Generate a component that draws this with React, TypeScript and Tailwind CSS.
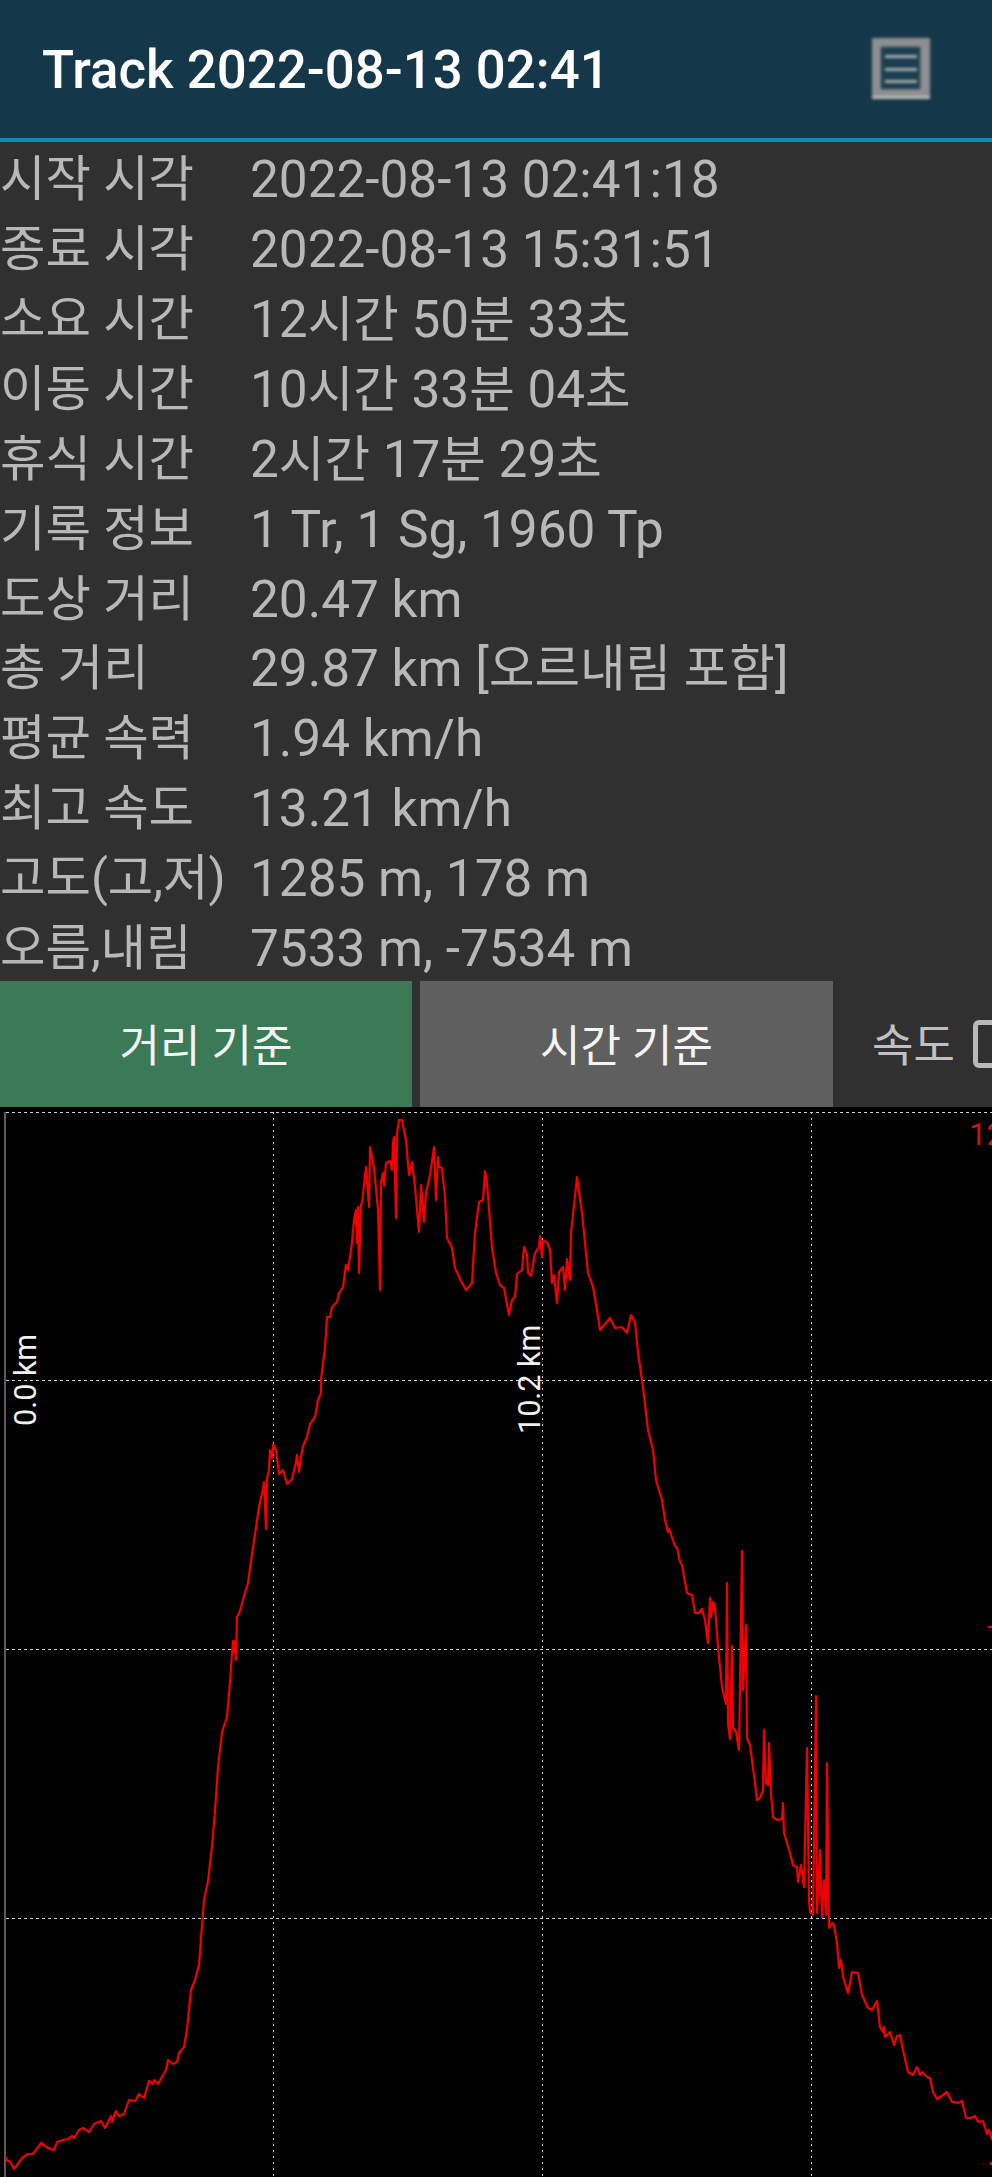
const rows = [
  ['시작 시각', '2022-08-13 02:41:18'],
  ['종료 시각', '2022-08-13 15:31:51'],
  ['소요 시간', '12시간 50분 33초'],
  ['이동 시간', '10시간 33분 04초'],
  ['휴식 시간', '2시간 17분 29초'],
  ['기록 정보', '1 Tr, 1 Sg, 1960 Tp'],
  ['도상 거리', '20.47 km'],
  ['총 거리', '29.87 km [오르내림 포함]'],
  ['평균 속력', '1.94 km/h'],
  ['최고 속도', '13.21 km/h'],
  ['고도(고,저)', '1285 m, 178 m'],
  ['오름,내림', '7533 m, -7534 m'],
];

type Pt = [number, number];

// elevation trace, in page coordinates
const climb: Pt[] = [
  [6,2157],[7,2161],[9,2161],[11,2163],[14,2169],[17,2165],[22,2158],[28,2154],[33,2154],[41,2143],[48,2148],[54,2150],[57,2142],[63,2140],[68,2139],[72,2136],[74,2138],[79,2130],[83,2128],[89,2132],[94,2124],[101,2121],[105,2128],[111,2116],[112,2122],[116,2111],[119,2116],[124,2114],[129,2100],[135,2101],[139,2094],[144,2098],[149,2081],[153,2084],[154,2080],[158,2084],[163,2075],[166,2070],[168,2060],[173,2064],[177,2062],[179,2053],[184,2047],[187,2029],[191,1990],[195,1980],[199,1965],[202,1925],[204,1900],[208,1881],[212,1846],[215,1811],[218,1767],[222,1732],[227,1717],[230,1682],[232,1653],[233,1641],[234,1653],[235,1641],[236,1660],[237,1617],[240,1611],[244,1596],[248,1583],[252,1554],[257,1521],[259,1507],[263,1489],[264,1482],[266,1529],[267,1479],[269,1469],[270,1450],[272,1458],[273,1444],[276,1450],[279,1474],[283,1470],[287,1484],[292,1479],[296,1462],[297,1455],[299,1472],[301,1457],[303,1446],[307,1437],[310,1424],[315,1417],[318,1400],
  [321,1393],[321,1380],[325,1347],[327,1317],[330,1317],[332,1307],[337,1302],[339,1293],[343,1287],[346,1265],[348,1270],[352,1243],[354,1220],[356,1210],[357,1243],[358,1207],[359,1273],[361,1204],[362,1203],[366,1167],[369,1207],[370,1147],[374,1168],[378,1210],[380,1290],[381,1183],[383,1173],[384,1186],[386,1163],[390,1161],[392,1170],[393,1143],[394,1137],[396,1218],[397,1133],[399,1120],[402,1120],[406,1140],[409,1175],[412,1162],[415,1187],[419,1232],[421,1185],[424,1222],[426,1193],[430,1175],[434,1147],[436,1200],[438,1157],[439,1167],[442,1168],[445,1197],[447,1238],[452,1248],[455,1268],[462,1283],[466,1290],[472,1283],[475,1233],[479,1202],[483,1200],[485,1171],[487,1183],[492,1247],[496,1273],[500,1285],[504,1288],[509,1315],[512,1300],[515,1297],[517,1274],[522,1270],[524,1247],[527,1255],[528,1273],[531,1276],[535,1253],[539,1247],[540,1236],[542,1257],[543,1241],[547,1242],[550,1250],[552,1283],[554,1275],[557,1303],[559,1272],[563,1267],[565,1290],[567,1259],[570,1280],[571,1233],[577,1177],[582,1213],[588,1273],[593,1287],[597,1310],[600,1330],[610,1318],[615,1328],[622,1327],[627,1333],[631,1315],[635,1322],[638,1353],[643,1387],[648,1430],[653,1450],[656,1480],[662,1500],
  [665,1520],[668,1532],[669,1529],[675,1546],[677,1548],[680,1562],[682,1565],[687,1593],[692,1595],[695,1613],[699,1613],[702,1609],[705,1620],[708,1643],[710,1598],[711,1617],[713,1602],[715,1607],[718,1647],[722,1687],[726,1704],[727,1583],[728,1723],[730,1739],[732,1646],[733,1728],[736,1732],[739,1750],[742,1551],[743,1690],[746,1625],[747,1738],[750,1745],[755,1783],[757,1800],[760,1798],[763,1790],[764,1730],[766,1783],[768,1785],[769,1743],[771,1793],[773,1817],[777,1820],[782,1819],[783,1803],[784,1833],[790,1853],[793,1865],[797,1867],[798,1882],[801,1865],[804,1887],[807,1748],[809,1900],
  [810,1912],[813,1915],[816,1696],[817,1913],[820,1850],[822,1917],[824,1880],[826,1915],[827,1763],[829,1928],[832,1923],[834,1925],[837,1943],[839,1968],[841,1960],[843,1977],[848,1993],[852,1972],[858,1973],[862,1995],[868,2008],[872,2010],[877,2001],[880,2027],[883,2032],[884,2027],[885,2037],[890,2032],[894,2045],[897,2036],[900,2035],[903,2050],[908,2072],[913,2075],[917,2067],[920,2075],[922,2072],[927,2077],[930,2078],[933,2092],[937,2099],[940,2097],[943,2095],[947,2092],[952,2102],[955,2102],[958,2103],[962,2101],[966,2118],[971,2118],[975,2116],[978,2122],[983,2121],[987,2134],[989,2130],[992,2140],
];

const tracePath = 'M' + climb.map(([x, y]) => `${x} ${y}`).join('L');

// hangul runs are a bit smaller than the digits around them
function Value({ text }: { text: string }) {
  return (
    <span className="text-[51.3px]">
      {text.split(/([가-힣]+)/).map((part, i) =>
        i % 2 ? (
          <span key={i} className="text-[49.5px]">{part}</span>
        ) : (
          part
        ),
      )}
    </span>
  );
}

function MenuIcon() {
  return (
    <svg width="64" height="68" viewBox="0 0 64 68" className="blur-[1.5px]">
      <rect x="2" y="3" width="58" height="61" fill="#8f8f8f" />
      <rect x="2" y="61" width="58" height="3" fill="#bdbdbd" />
      <rect x="11" y="12" width="39" height="42" fill="#1b3e50" stroke="#3d5664" />
      <rect x="15" y="20" width="32" height="3" fill="#a8aeb2" />
      <rect x="15" y="33" width="32" height="3" fill="#a8aeb2" />
      <rect x="15" y="45" width="32" height="3" fill="#a8aeb2" />
    </svg>
  );
}

function ElevationChart() {
  const font = 'Roboto, sans-serif';
  return (
    <svg width="992" height="1070" viewBox="0 1107 992 1070" className="block bg-black">
      <g stroke="#cfcfcf" strokeWidth="1" shapeRendering="crispEdges">
        {[1112.5, 1380.5, 1649.5, 1918.5].map((y) => (
          <line key={y} x1="6" y1={y} x2="992" y2={y} strokeDasharray="3 3" />
        ))}
        {[273.5, 542.5, 811.5].map((x) => (
          <line key={x} x1={x} y1="1112" x2={x} y2="2177" strokeDasharray="2 4" />
        ))}
      </g>
      <rect x="4" y="1112" width="2" height="1065" fill="#5a5a5a" />
      <path d={tracePath} fill="none" stroke="#f00000" strokeWidth="2.2" strokeLinejoin="round" />
      <rect x="988" y="1626" width="4" height="2" fill="#e01010" />
      <rect x="990" y="2162" width="2" height="3" fill="#e01010" />
      <text x="969" y="1145" fontFamily={font} fontSize="31" fill="#c81414">12</text>
      <text transform="translate(36 1426) rotate(-90)" fontFamily={font} fontSize="30.5" fill="#f0f0f0">0.0 km</text>
      <text transform="translate(540 1434) rotate(-90)" fontFamily={font} fontSize="30.5" fill="#f0f0f0">10.2 km</text>
    </svg>
  );
}

export default function App() {
  return (
    <div className="w-[992px] h-[2177px] overflow-hidden bg-[#303030] font-[Roboto,'Noto_Sans_CJK_KR',sans-serif]">
      <header className="h-[142px] flex items-center justify-between pl-[42px] pr-[58px] bg-[#15374a] border-b-[4px] border-[#0f8db0]">
        <h1 className="pt-[2px] text-[52.8px] leading-none font-medium text-white whitespace-nowrap">Track 2022-08-13 02:41</h1>
        <MenuIcon />
      </header>

      <div className="h-[839px] pt-[3px]">
        {rows.map(([label, value]) => (
          <div key={label} className="grid grid-cols-[250px_1fr] h-[69.9px] items-center leading-none text-[#b8b8b8] whitespace-nowrap">
            <span className="text-[49.4px]">{label}</span>
            <Value text={value} />
          </div>
        ))}
      </div>

      <div className="flex h-[126px] overflow-hidden">
        <button className="w-[412px] shrink-0 pt-[6px] bg-[#3b7a57] text-[44px] text-[#f4f4f4]">거리 기준</button>
        <button className="w-[413px] shrink-0 ml-[8px] pt-[6px] bg-[#5f5f5f] text-[44px] text-[#f4f4f4]">시간 기준</button>
        <div className="flex items-center shrink-0 ml-[39px] gap-[18px]">
          <span className="pt-[5px] text-[45px] text-[#c0c0c0]">속도</span>
          <span className="w-[48px] h-[48px] shrink-0 rounded-[6px] border-[5px] border-[#b8b8b8]" />
        </div>
      </div>

      <ElevationChart />
    </div>
  );
}
